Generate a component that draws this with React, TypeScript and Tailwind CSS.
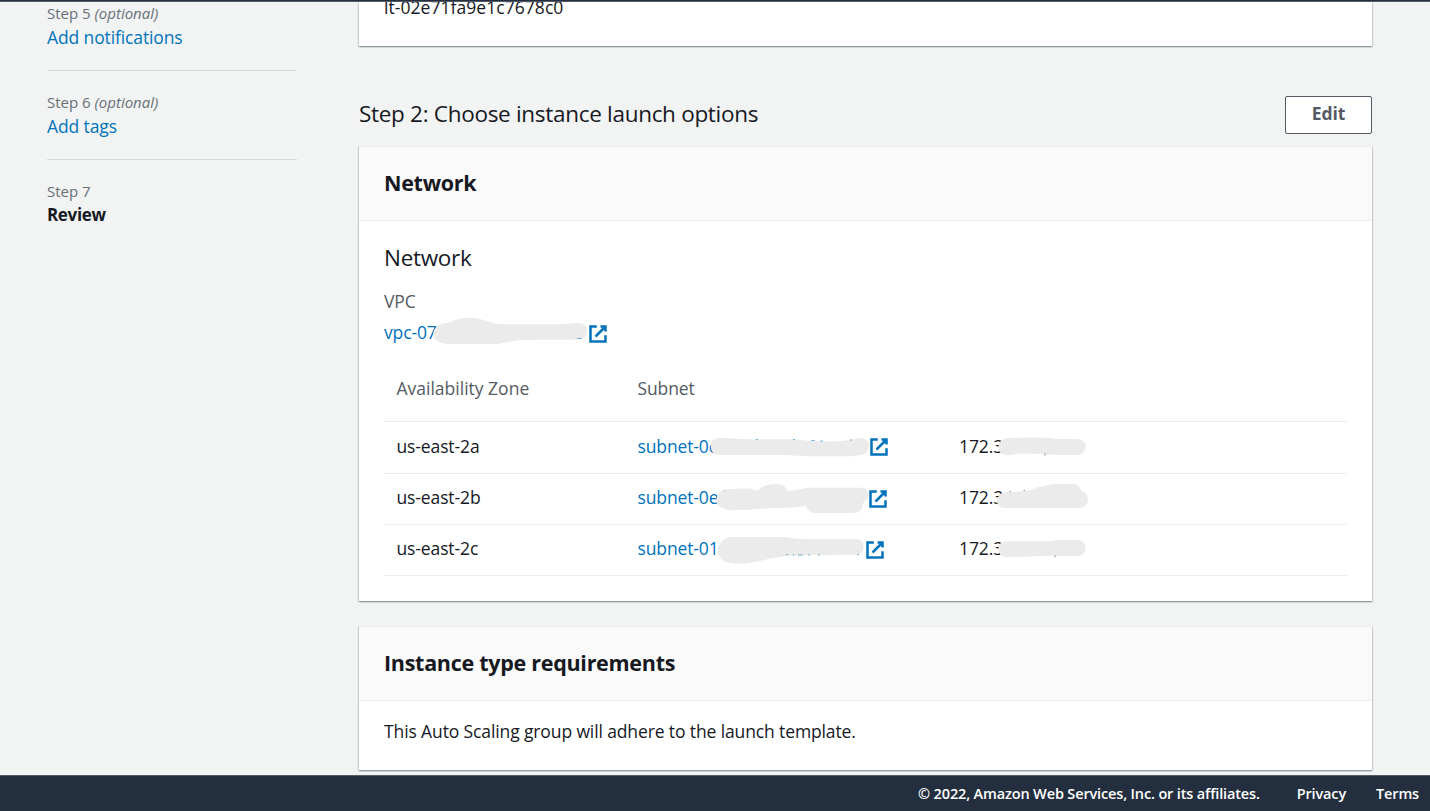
import type { ReactNode } from 'react';

function ExternalIcon() {
  return (
    <svg viewBox="0 0 16 16" className="h-5 w-5 shrink-0" fill="none" stroke="#0073bb" strokeWidth="2">
      <path d="M10 2h4v4M6 10l8-8M14 9.048V14H2V2h5" />
    </svg>
  );
}

/* Smudge drawn over the sensitive part of an identifier. */
function Smudge({ box, d, marks, color = '#0073bb', className }: { box: string; d: string; marks?: string; color?: string; className: string }) {
  return (
    <svg viewBox={box} className={`pointer-events-none absolute top-0 overflow-visible ${className}`}>
      <path d={d} fill="#ebebeb" />
      {marks && <path d={marks} stroke={color} strokeWidth="1" strokeOpacity="0.5" fill="none" />}
    </svg>
  );
}

const cardShadow =
  'shadow-[0_1.25px_1.25px_0_rgba(0,28,36,0.3),1.25px_1.25px_1.25px_0_rgba(0,28,36,0.15),-1.25px_1.25px_1.25px_0_rgba(0,28,36,0.15)]';

function Card({ title, children, className = '' }: { title: string; children: ReactNode; className?: string }) {
  return (
    <section className={`border-t border-[#eaeded] bg-white ${cardShadow} ${className}`}>
      <header className="flex h-[74px] items-center border-b border-[#eaeded] bg-[#fafafa] px-[25px] pb-px">
        <h2 className="text-[21.5px] leading-7 font-bold tracking-[-0.28px]">{title}</h2>
      </header>
      {children}
    </section>
  );
}

function Step({ n, optional, title, current }: { n: number; optional?: boolean; title: string; current?: boolean }) {
  return (
    <li className={current ? 'pt-[21px]' : 'border-b border-[#d5dbdb] pt-[21px] pb-[19px]'}>
      <div className="h-5 text-[15px] leading-5 tracking-normal text-[#687078]">
        Step {n} {optional && <i>(optional)</i>}
      </div>
      {current ? (
        <div className="h-7 text-[17px] leading-7 font-bold tracking-[-0.35px]">{title}</div>
      ) : (
        <a className="block h-7 leading-7 text-[#0073bb]">{title}</a>
      )}
    </li>
  );
}

const rows = [
  {
    zone: 'us-east-2a',
    subnet: 'subnet-0c',
    ip: '172.3',
    height: 'h-[52px] pb-px',
    textPad: 'pb-px',
    linkWidth: 'w-[231.5px]',
    subnetBox: '625 422 290 51',
    subnetSmudge:
      'M710.7 446C711 441 714 438 720 438C732 438 740 439.3 753 439.3H787C800 439.3 808 441.5 820 441.5C832 441.5 842 441.5 850 440C855 439 857 438 860 438C866 438 869 441 869 446C869 450 866 454.7 860 455C856 456 853 456.3 850 456.3H813C800 456.3 793 455 783 455H720C713 455 711 451 710.7 446Z',
    subnetMarks: 'M756 439.500h2M793 439.500h2M811 440.500h4M820 441h3M850 440h2',
    ipBox: '946.500 422 200 51',
    ipSmudge:
      'M998 446.700C998 441 1003 438 1010 438C1022 437.500 1035 437.500 1047 437.700C1051 438 1054 439 1057 439H1077C1082 439 1085 442 1085 446.700C1085 451.500 1082 455 1077 455C1060 455.500 1035 453.500 1020 453.500C1014 454 1011 455.300 1006 455C1000 454.500 998 451 998 446.700Z',
    ipMarks: 'M1045 453.500l-1 2',
  },
  {
    zone: 'us-east-2b',
    subnet: 'subnet-0e',
    ip: '172.3',
    height: 'h-[51px]',
    textPad: 'pb-[3px]',
    linkWidth: 'w-[230.5px]',
    subnetBox: '625 474 290 51',
    subnetSmudge:
      'M716 501C717 494 720 489 732 489C742 488 752 488 758 490.500C762 486 768 484 777 484C783 484 786 487 787 490.800C794 490.500 800 489 807 487.700H862C867 488 869 491 868.700 495C868.500 499 866 501 863.500 502C863 508 861 513 853 513H817C810 513 806.500 510 806 506C797 507 789 508 780 508C762 508 748 510.300 733 510.300C722 510 717 506 716 501Z',
    subnetMarks: 'M724 490.500h1',
    ipBox: '946.500 474 200 51',
    ipSmudge:
      'M996.700 501.700C997 496 1000 492 1006 492C1014 492 1021 491.500 1027 490.700C1031 490 1034 488 1037 487.300C1044 486.500 1049 484 1055 484H1072C1077 484 1080 487 1080.500 491C1085 492 1087.300 495 1087.300 499C1087.300 505 1084 508 1077 508H1006C1000 508 997 506 996.700 501.700Z',
    ipMarks: 'M1009 491.500h1.500M1023 490.500h1.500',
  },
  {
    zone: 'us-east-2c',
    subnet: 'subnet-01',
    ip: '172.3',
    height: 'h-[51px]',
    textPad: 'pb-[3px]',
    linkWidth: 'w-[227.5px]',
    subnetBox: '625 525 290 51',
    subnetSmudge:
      'M717.700 551.700C718 544 723 537 733 537H777C787 536.700 795 539 803 539H856C861 539 863.700 542 863.700 547C863.700 552 861 554.700 856 554.700C835 555 810 554.500 790 555.700C776 557 765 560 753 562.300C748 563.500 743 563.700 738 563.700C726 563.500 718 560 717.700 551.700Z',
    subnetMarks: 'M786 554.500h2M793.500 554v1.500M798 555h5M808 555h2M818 555h2M857 554.500h2',
    ipBox: '946.500 525 200 51',
    ipSmudge:
      'M998 548.500C998 544 1001 541.500 1006 541.300H1045C1051 541 1055 540 1060 540H1077C1082 540 1085 543 1085 548C1085 553 1082 556 1077 556H1053C1035 556 1022 557 1006 557C1001 557 998 554 998 548.500Z',
    ipMarks: 'M1055 555.500l-1 1.800',
  },
];

export default function App() {
  return (
    <div className="flex h-[811px] w-[1430px] flex-col overflow-hidden bg-[#f2f3f3] font-['Open_Sans','Noto_Sans',sans-serif] text-[17.5px] tracking-[-0.12px] text-[#16191f]">
      <div className="z-10 h-0.5 shrink-0 border-b border-[#545b64] bg-[#232f3e]" />
      <div className="flex min-h-0 flex-1 overflow-hidden">
        <nav className="w-[359px] shrink-0 pl-[47px]">
          <ol className="-mt-5 w-[250px]">
            <Step n={5} optional title="Add notifications" />
            <Step n={6} optional title="Add tags" />
            <Step n={7} title="Review" current />
          </ol>
        </nav>
        <main className="flex w-[1013px] shrink-0 flex-col">
          <div className={`flex h-11 shrink-0 flex-col bg-white px-[25px] ${cardShadow}`}>
            <div className="-mt-[9px] h-7 leading-7 tracking-[0.05px]">lt-02e71fa9e1c7678c0</div>
          </div>
          <div className="mt-[50px] flex h-[38px] shrink-0 items-center justify-between">
            <h1 className="pb-0.5 text-[22.5px] leading-7 tracking-[-0.3px]">Step 2: Choose instance launch options</h1>
            <button className="h-[38px] w-[87px] rounded-[2px] border border-[#545b64] bg-white pb-[3px] font-bold text-[#545b64]">Edit</button>
          </div>
          <Card title="Network" className="mt-3 h-[455px] shrink-0">
            <div className="px-[25px] pt-[23px]">
              <h3 className="text-[22.5px] leading-7 tracking-[-0.3px]">Network</h3>
              <div className="mt-[15px] h-7 leading-7 text-[#545b64]">VPC</div>
              <div className="relative mt-[5px] flex h-7 items-center">
                <a className="w-[204px] pb-[3px] text-[#0073bb]">vpc-07</a>
                <ExternalIcon />
                <Smudge
                  box="384 320 240 28"
                  className="left-0 h-7 w-60"
                  d="M433.300 333.300C434 327 440 323.500 447 323C454 321 459 317.700 470 317.700C483 318 489 323 500 324.300H563C569 324 573 323 578 323C584 323 587.300 326 587.300 331C587.300 336 584 339 578 339.500C560 340 540 339.500 520 340C510 341 503 344 493 344H448C438 343.500 433.500 339 433.300 333.300Z"
                  marks="M577 338.500h5"
                />
              </div>
              <div className="mt-4">
                <div className="grid h-[58px] grid-cols-[241px_321.5px_1fr] border-b border-[#eaeded] pt-2.5 leading-7 text-[#545b64]">
                  <div className="pl-[12.5px] tracking-normal">Availability Zone</div>
                  <div className="pl-[12.5px]">Subnet</div>
                </div>
                {rows.map((r) => (
                  <div key={r.zone} className={`grid grid-cols-[241px_321.5px_1fr] items-stretch border-b border-[#eaeded] ${r.height}`}>
                    <div className={`flex items-center pl-[12.5px] ${r.textPad}`}>{r.zone}</div>
                    <div className="relative flex items-center pl-[12.5px]">
                      <a className={`text-[#0073bb] ${r.textPad} ${r.linkWidth}`}>{r.subnet}</a>
                      <ExternalIcon />
                      <Smudge box={r.subnetBox} d={r.subnetSmudge} marks={r.subnetMarks} className="left-0 h-[51px] w-[290px]" />
                    </div>
                    <div className={`relative flex items-center pl-[12.5px] ${r.textPad}`}>
                      {r.ip}
                      <Smudge box={r.ipBox} d={r.ipSmudge} marks={r.ipMarks} color="#16191f" className="left-0 h-[51px] w-[200px]" />
                    </div>
                  </div>
                ))}
              </div>
            </div>
          </Card>
          <Card title="Instance type requirements" className="mt-[25px] h-36 shrink-0">
            <p className="px-[25px] pt-4 leading-7">This Auto Scaling group will adhere to the launch template.</p>
          </Card>
        </main>
      </div>
      <footer className="flex h-9 shrink-0 items-center justify-end border-t border-[#545b64] bg-[#232f3e] pr-[11px] text-[14.5px] font-semibold tracking-[-0.15px] text-white">
        <span>© 2022, Amazon Web Services, Inc. or its affiliates.</span>
        <a className="ml-[37px]">Privacy</a>
        <a className="ml-[30px]">Terms</a>
      </footer>
    </div>
  );
}
